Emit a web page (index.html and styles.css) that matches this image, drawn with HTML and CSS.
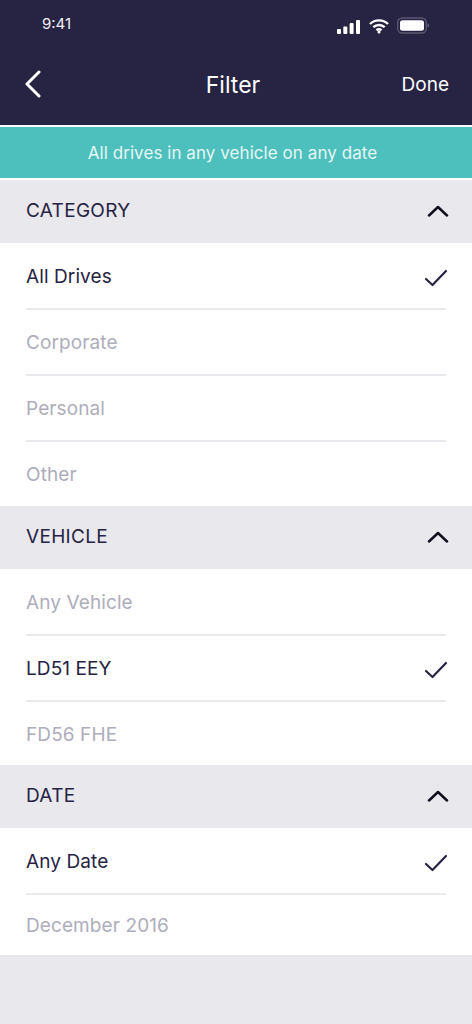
FILE: index.html
```html
<!DOCTYPE html>
<html lang="en">
<head>
<meta charset="utf-8">
<title>Filter</title>
<link rel="stylesheet" href="styles.css">
</head>
<body>
<div class="screen">
  <header class="top">
    <div class="status">
      <span class="time">9:41</span>
      <div class="status-icons">
        <svg class="signal" width="23" height="14" viewBox="0 0 23 14"><rect x="0" y="9" width="4" height="5" rx="1"/><rect x="6.300" y="6.500" width="4" height="7.500" rx="1"/><rect x="12.600" y="3" width="4" height="11" rx="1"/><rect x="19" y="0" width="4" height="14" rx="1"/></svg>
        <svg class="wifi" width="20" height="15" viewBox="0 0 20 15"><path d="M1 5 A13 13 0 0 1 19 5" /><path d="M4.300 8.200 A8.500 8.500 0 0 1 15.700 8.200"/><path d="M7.500 11.200 A4 4 0 0 1 12.500 11.200"/><circle cx="10" cy="13" r="1.500"/></svg>
        <svg class="battery" width="33" height="17" viewBox="0 0 33 17"><rect class="shell" x="0.700" y="1" width="28.600" height="15" rx="4.500"/><rect class="fill" x="3" y="3.200" width="24" height="10.600" rx="2.500"/><rect class="nub" x="30.500" y="6.500" width="1.500" height="4" rx="0.700"/></svg>
      </div>
    </div>
    <nav class="nav">
      <svg class="back" width="18" height="28" viewBox="0 0 18 28"><path d="M15 2 L3 14 L15 26"/></svg>
      <h1 class="title">Filter</h1>
      <span class="done">Done</span>
    </nav>
  </header>
  <div class="summary">All drives in any vehicle on any date</div>

  <section>
    <div class="sec-head"><span>CATEGORY</span><svg class="chev" width="22" height="12" viewBox="0 0 22 12"><path d="M2 10.500 L11 2 L20 10.500"/></svg></div>
    <ul class="list list-cat">
      <li class="row on"><span>All Drives</span><svg class="tick" width="24" height="18" viewBox="0 0 24 18"><path d="M2 10 L8.500 16 L22 2"/></svg></li>
      <li class="row"><span>Corporate</span></li>
      <li class="row short"><span>Personal</span></li>
      <li class="row"><span>Other</span></li>
    </ul>
  </section>

  <section>
    <div class="sec-head"><span>VEHICLE</span><svg class="chev" width="22" height="12" viewBox="0 0 22 12"><path d="M2 10.500 L11 2 L20 10.500"/></svg></div>
    <ul class="list list-veh">
      <li class="row"><span>Any Vehicle</span></li>
      <li class="row on"><span>LD51 EEY</span><svg class="tick" width="24" height="18" viewBox="0 0 24 18"><path d="M2 10 L8.500 16 L22 2"/></svg></li>
      <li class="row"><span>FD56 FHE</span></li>
    </ul>
  </section>

  <section>
    <div class="sec-head"><span>DATE</span><svg class="chev" width="22" height="12" viewBox="0 0 22 12"><path d="M2 10.500 L11 2 L20 10.500"/></svg></div>
    <ul class="list list-date">
      <li class="row on"><span>Any Date</span><svg class="tick" width="24" height="18" viewBox="0 0 24 18"><path d="M2 10 L8.500 16 L22 2"/></svg></li>
      <li class="row"><span>December 2016</span></li>
    </ul>
  </section>
</div>
</body>
</html>
```
FILE: styles.css
```css
* { box-sizing: border-box; }
html, body { margin: 0; padding: 0; }
body {
  background: #e8e8ed;
  font-family: Inter, "Noto Sans", sans-serif;
  color: #272343;
}
.screen {
  width: 472px;
  height: 1024px;
  overflow: hidden;
  display: flex;
  flex-direction: column;
  background: #e8e8ed;
}
.top {
  height: 127px;
  background: #272343;
  border-bottom: 2px solid #fff;
  color: #fff;
}
.status {
  height: 50px;
  display: flex;
  justify-content: space-between;
  padding: 15px 42px 0 42px;
}
.time { font-size: 15px; line-height: 18px; color: #f1f0f4; }
.status-icons { display: flex; align-items: flex-start; gap: 8px; padding-top: 2px; }
.signal { fill: #fff; margin-top: 3px; margin-right: 1px; }
.wifi { margin-top: 2px; fill: #fff; }
.wifi path { fill: none; stroke: #fff; stroke-width: 2.400; }
.shell { fill: none; stroke: #5d5a73; stroke-width: 1.300; }
.fill { fill: #fff; }
.nub { fill: #5d5a73; }
.nav {
  height: 75px;
  position: relative;
  display: flex;
  align-items: center;
  justify-content: center;
  padding: 0 6px 5px 0;
}
.back {
  position: absolute;
  left: 24px;
  top: 20px;
  fill: none;
  stroke: #fff;
  stroke-width: 3;
  stroke-linecap: round;
  stroke-linejoin: round;
}
.title { margin: 0; font-size: 23px; font-weight: 400; line-height: 28px; }
.done { position: absolute; right: 23px; top: 23px; font-size: 19px; line-height: 24px; }
.summary {
  height: 53px;
  padding: 1px 7px 0 0;
  background: #4dbfbc;
  border-bottom: 2px solid #fff;
  color: #e6f7f6;
  font-size: 17px;
  letter-spacing: 0.060px;
  line-height: 50px;
  text-align: center;
}
.sec-head {
  height: 63px;
  padding: 0 23px 2px 26px;
  display: flex;
  justify-content: space-between;
  align-items: center;
  font-size: 19px;
  letter-spacing: 0.300px;
  line-height: 24px;
  background: #e8e8ed;
}
.chev {
  fill: none;
  stroke: #12101f;
  stroke-width: 2.500;
  stroke-linecap: round;
  stroke-linejoin: round;
}
.list {
  list-style: none;
  margin: 0;
  padding: 1px 26px 0;
  background: #fff;
  display: flex;
  flex-direction: column;
}
.list-cat { height: 263px; }
.list-veh { height: 196px; }
.list-date { height: 127px; }
.row {
  height: 66px;
  padding-top: 1px;
  display: flex;
  justify-content: space-between;
  align-items: center;
  font-size: 19px;
  letter-spacing: 0.100px;
  color: #aeadbb;
  border-bottom: 2.500px solid #e9e9ee;
}
.row.short { height: 65.500px; }
.row:last-child { border-bottom: none; flex: 1; }
.row.on { color: #272343; }
.tick {
  fill: none;
  stroke: #272343;
  stroke-width: 2.200;
  stroke-linecap: round;
  stroke-linejoin: round;
  margin: 2px -2px 0 0;
}
```
